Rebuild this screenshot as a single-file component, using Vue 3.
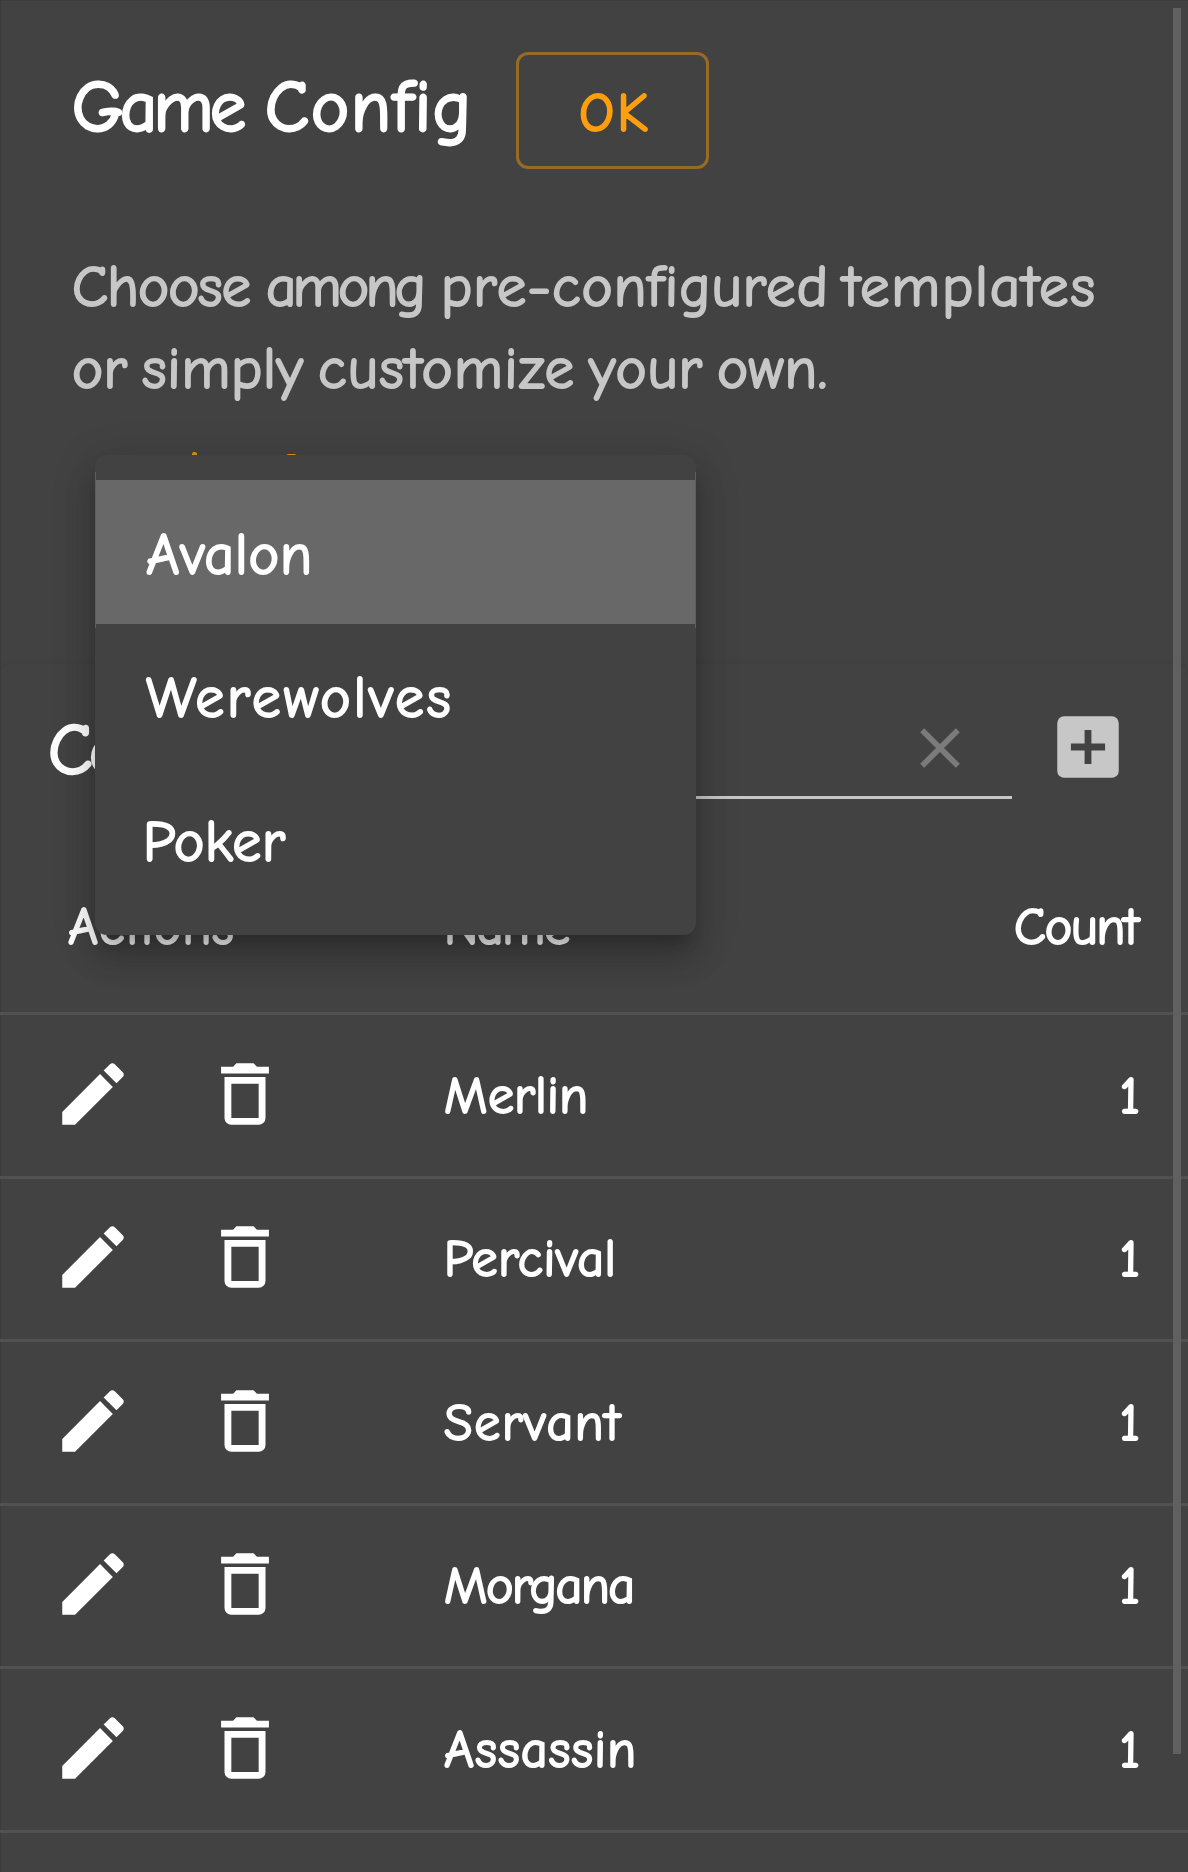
<script setup>
const title = [['Game', 174], ['Config', 206]]
const intro = [
  [['Choose', 179], ['among', 160], ['pre-configured', 387], ['templates', 252]],
  [['or', 55], ['simply', 161], ['customize', 256], ['your', 113], ['own.', 110]],
]
const rows = [
  { name: 'Merlin', width: 144, count: 1 },
  { name: 'Percival', width: 172, count: 1 },
  { name: 'Servant', width: 176, count: 1 },
  { name: 'Morgana', width: 191, count: 1 },
  { name: 'Assassin', width: 192, count: 1 },
]
const templates = [
  { name: 'Avalon', width: 166, active: true },
  { name: 'Werewolves', width: 305 },
  { name: 'Poker', width: 142, shift: true },
]

// Tracks a word out to a given width in pixels.
const vFit = {
  mounted(el, { value }) {
    el.style.display = 'inline-block'
    const natural = el.getBoundingClientRect().width
    const spacing = (value - natural) / (el.textContent.trim().length - 1)
    el.style.letterSpacing = spacing + 'px'
    el.style.marginRight = -spacing + 'px'
  },
}
</script>

<template>
  <main class="page">
    <section class="intro">
      <header class="head">
        <h1><span v-for="[word, width] in title" :key="word" v-fit="width">{{ word }}</span></h1>
        <button class="ok"><span v-fit="69">OK</span></button>
      </header>
      <div class="lead">
        <p v-for="(line, i) in intro" :key="i">
          <span v-for="[word, width] in line" :key="word" v-fit="width">{{ word }}</span>
        </p>
      </div>
    </section>

    <section class="card">
      <div class="toolbar">
        <h2>Co</h2>
        <div class="field">
          <svg class="clear" viewBox="0 0 24 24"><path d="M19 6.41 17.59 5 12 10.59 6.41 5 5 6.41 10.59 12 5 17.59 6.41 19 12 13.41 17.59 19 19 17.59 13.41 12z" /></svg>
        </div>
        <svg class="add" viewBox="0 0 24 24"><path d="M17 13h-4v4h-2v-4H7v-2h4V7h2v4h4m2-8H5a2 2 0 0 0-2 2v14a2 2 0 0 0 2 2h14a2 2 0 0 0 2-2V5a2 2 0 0 0-2-2z" /></svg>
      </div>
      <div class="row labels">
        <div class="actions"><span v-fit="166">Actions</span></div>
        <div class="name"><span v-fit="126">Name</span></div>
        <div class="count"><span v-fit="125">Count</span></div>
      </div>
      <div v-for="r in rows" :key="r.name" class="row">
        <div class="actions">
          <svg viewBox="0 0 24 24"><path d="M20.71 7.04c.39-.39.39-1.04 0-1.41l-2.34-2.34c-.37-.39-1.02-.39-1.41 0l-1.84 1.83 3.75 3.75M3 17.25V21h3.75L17.81 9.93l-3.75-3.75z" /></svg>
          <svg viewBox="0 0 24 24"><path d="M6 19a2 2 0 0 0 2 2h8a2 2 0 0 0 2-2V7H6v12M8 9h8v10H8V9m7.5-5-1-1h-5l-1 1H5v2h14V4z" /></svg>
        </div>
        <div class="name"><span v-fit="r.width">{{ r.name }}</span></div>
        <div class="count"><span class="digit">{{ r.count }}</span></div>
      </div>
    </section>

    <i class="tip stem"></i>
    <i class="tip hook"></i>
    <div class="menu">
      <div v-for="t in templates" :key="t.name" class="item" :class="{ active: t.active, shift: t.shift }">
        <span v-fit="t.width">{{ t.name }}</span>
      </div>
      <i class="outline"></i>
    </div>
    <div class="scrollbar"></div>
  </main>
</template>

<style>
body { margin: 0; background: #424242; }
</style>

<style scoped>
* { box-sizing: border-box; }
.page {
  position: relative;
  width: 1188px;
  height: 1872px;
  overflow: hidden;
  background: #424242;
  color: #fff;
  font-family: "Comic Sans MS", "Comic Neue", Lato, sans-serif;
  -webkit-text-stroke: 2px currentColor;
  white-space: nowrap;
  box-shadow: inset 1px 1px 0 #3b3b3b;
}
svg { display: block; fill: currentColor; flex: none; }
.intro { height: 664px; padding: 52px 0 0 72px; }
.head { display: flex; align-items: flex-start; height: 117px; }
h1 {
  display: flex;
  gap: 19px;
  margin: 0;
  width: 444px;
  padding-top: 2px;
  font-size: 72px;
  font-weight: 400;
  line-height: 107px;
  -webkit-text-stroke-width: 2.8px;
}
.ok {
  width: 193px;
  height: 117px;
  padding: 6px 0 0 2px;
  border: 3px solid #976b26;
  border-radius: 12px;
  background: none;
  color: #ff9f0e;
  font: inherit;
  font-size: 55px;
  line-height: 105px;
}
.lead { padding-top: 77px; color: #c7c7c7; font-size: 59px; line-height: 82px; }
p { display: flex; gap: 15px; margin: 0; }
.card { height: 1208px; border-radius: 12px 12px 0 0; box-shadow: 0 -1px 6px rgba(0, 0, 0, .06); }
.toolbar { display: flex; align-items: center; height: 168px; padding-left: 48px; }
h2 { flex: none; margin: 0; width: 352px; padding-top: 4px; font-size: 73px; font-weight: 400; line-height: 84px; letter-spacing: -4px; -webkit-text-stroke-width: 2.4px; }
.field {
  display: flex;
  flex: none;
  align-items: center;
  justify-content: flex-end;
  width: 612px;
  height: 102px;
  padding: 3px 38px 0 0;
  border-bottom: 3px solid #c7c7c7;
}
.clear { width: 68px; height: 68px; color: #7b7b7b; }
.add { width: 82px; height: 82px; margin: -2px 0 0 35px; color: #c7c7c7; }
.row {
  display: flex;
  align-items: center;
  height: 163.5px;
  padding-bottom: 3px;
  border-bottom: 3px solid #515151;
  font-size: 52px;
}
.labels { height: 183px; padding: 9px 0 0; font-size: 52px; }
.actions { display: flex; gap: 70px; width: 444px; padding-left: 52px; }
.labels .actions { padding-left: 68px; }
.actions svg { width: 82px; height: 82px; }
.name { width: 400px; }
.row:not(.labels) .name, .row:not(.labels) .count { padding-top: 4px; }
.count { flex: 1; padding-right: 49px; text-align: right; }
.digit { display: inline-block; margin-right: -1px; }
.menu {
  position: absolute;
  left: 95px;
  top: 455px;
  width: 600.5px;
  height: 480px;
  padding: 25px 0 24px;
  border-radius: 12px;
  background: #424242;
  box-shadow: 0 15px 15px -9px rgba(0, 0, 0, .2), 0 24px 30px 3px rgba(0, 0, 0, .14), 0 9px 42px 6px rgba(0, 0, 0, .12);
}
.item { height: 144px; padding: 3px 0 0 51px; font-size: 58px; line-height: 144px; }
.active { background: #686868; }
.shift { padding-left: 48px; }
.active span { margin-top: 1px; }
.outline {
  position: absolute;
  left: 0;
  top: 17px;
  width: 600.5px;
  height: 156px;
  border: solid #705c3c;
  border-width: 0 1px;
}
.tip { position: absolute; background: #e0920f; }
.stem { left: 192px; top: 452px; width: 5px; height: 4px; border-radius: 2px 2px 0 0; }
.hook { left: 286px; top: 454px; width: 11px; height: 3px; border-radius: 5px 5px 0 0; }
.scrollbar { position: absolute; right: 7px; top: 8px; width: 8px; height: 1746px; background: #606060; }
</style>
